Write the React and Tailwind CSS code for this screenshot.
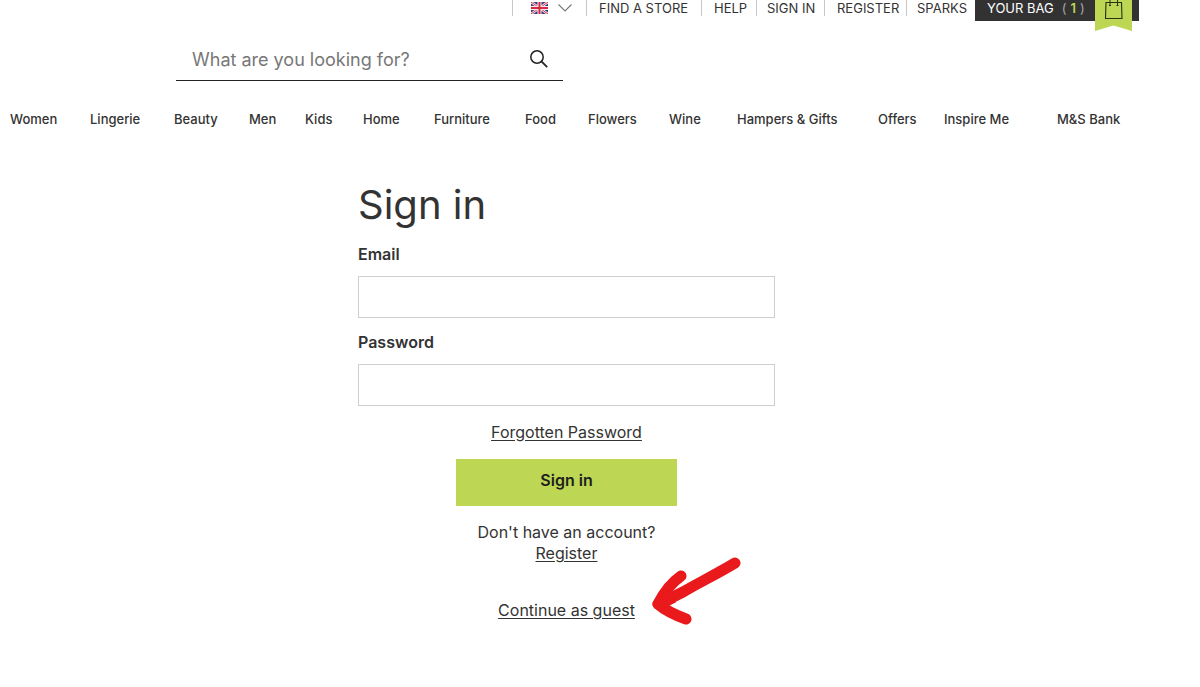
import { useState } from "react";

const UTILITY_LINKS = [
  { label: "FIND A STORE", className: "w-[115px] pl-3" },
  { label: "HELP", className: "w-[55px] pl-3" },
  { label: "SIGN IN", className: "w-[68px] pl-[10px]" },
  { label: "REGISTER", className: "w-[82px] pl-3" },
  { label: "SPARKS", className: "w-[69px] pl-[10px]" },
];

const DEPARTMENTS = [
  "Women", "Lingerie", "Beauty", "Men", "Kids", "Home", "Furniture",
  "Food", "Flowers", "Wine", "Hampers & Gifts", "Offers", "Inspire Me", "M&S Bank",
];

// ── icons ─────────────────────────────────────────────────────────────────
function FlagIcon() {
  return (
    <svg className="h-3 w-[17px]" viewBox="0 0 34 24" aria-hidden="true">
      <rect width="34" height="24" fill="#3b3f86" />
      <path d="M0 0L34 24M34 0L0 24" stroke="#f3e6ee" strokeWidth="5" />
      <path d="M0 0L34 24M34 0L0 24" stroke="#d8405a" strokeWidth="2" />
      <path d="M17 0V24M0 12H34" stroke="#f3e6ee" strokeWidth="8" />
      <path d="M17 0V24M0 12H34" stroke="#d8293f" strokeWidth="4" />
    </svg>
  );
}

function ChevronIcon() {
  return (
    <svg className="h-2 w-[14px]" viewBox="0 0 14 8" fill="none" stroke="#777" strokeWidth="1.1" aria-hidden="true">
      <path d="M0.5 0.5L7 7L13.5 0.5" />
    </svg>
  );
}

function SearchIcon() {
  return (
    <svg className="h-[18px] w-[18px]" viewBox="0 0 18 18" fill="none" stroke="#222" strokeWidth="1.5" aria-hidden="true">
      <circle cx="7" cy="7" r="6.2" />
      <path d="M11.4 11.4L17.2 17.2" strokeWidth="1.8" />
    </svg>
  );
}

function BagRibbon() {
  return (
    <svg className="absolute right-[7px] top-0 h-[31px] w-[37px]" viewBox="0 0 37 31" fill="none" aria-hidden="true">
      <path d="M0 0H37V31L18.5 25.5L0 31Z" fill="#bdd754" />
      <path d="M11 2.5H26.5L27 18.5H10.5Z" stroke="#2b3014" strokeWidth="1.1" />
      <path d="M15 6V0M22.5 6V0" stroke="#2b3014" strokeWidth="1" />
      <path d="M14 5.5H16M21.5 5.5H23.5" stroke="#2b3014" strokeWidth="1.2" />
    </svg>
  );
}

function Arrow() {
  return (
    <svg
      className="pointer-events-none absolute left-full top-1/2 ml-4 h-[70px] w-[90px] -translate-y-[55px]"
      viewBox="0 0 90 70" fill="none" stroke="#e9191c" strokeWidth="11" strokeLinecap="round" strokeLinejoin="round"
      aria-hidden="true"
    >
      <path d="M84 7C64 19 49 26 32 36C22 41 14 45 7 48" />
      <path d="M30 20C20 27 12 38 7 48C15 55 24 59 35 63" />
      <path d="M12 45L22 40" strokeWidth="14" strokeLinecap="butt" />
    </svg>
  );
}

// ── header ────────────────────────────────────────────────────────────────
function UtilityBar() {
  return (
    <div className="flex h-[21px] justify-end pr-[61px] text-[13px] leading-4">
      <div className="flex h-4">
        <button
          type="button"
          aria-label="Choose country"
          className="flex w-[74px] items-center gap-[10px] border-l border-[#c8c8c8] pl-[18px]"
        >
          <FlagIcon />
          <ChevronIcon />
        </button>
        {UTILITY_LINKS.map(({ label, className }) => (
          <a key={label} href="#" className={`whitespace-nowrap border-l border-[#c8c8c8] ${className}`}>
            {label}
          </a>
        ))}
      </div>
      <a href="#" className="relative flex h-[21px] w-[164px] gap-2 bg-[#323232] pl-3 text-white">
        <span>YOUR BAG</span>
        <span className="flex gap-1 text-[#a5a5a5]">
          <span>(</span>
          <span className="font-semibold text-[#bdd754]">1</span>
          <span>)</span>
        </span>
        <BagRibbon />
      </a>
    </div>
  );
}

function SearchForm() {
  const [query, setQuery] = useState("");

  return (
    <form
      onSubmit={e => e.preventDefault()}
      className="ml-44 mt-4 flex h-11 w-[387px] border-b border-[#222]"
    >
      <input
        type="search"
        aria-label="Search"
        placeholder="What are you looking for?"
        value={query}
        onChange={e => setQuery(e.target.value)}
        className="min-w-0 flex-1 pl-4 pt-[2px] text-lg outline-none placeholder:text-[#777]"
      />
      <button type="submit" aria-label="Search" className="flex w-12 items-center justify-center">
        <SearchIcon />
      </button>
    </form>
  );
}

function DepartmentNav() {
  return (
    <nav className="mt-7 pl-[10px]">
      <ul className="grid grid-cols-[80fr_84fr_75fr_56fr_58fr_71fr_91fr_63fr_81fr_68fr_141fr_66fr_113fr_143fr] text-[13px] font-medium leading-5">
        {DEPARTMENTS.map(name => (
          <li key={name} className="whitespace-nowrap">
            <a href="#">{name}</a>
          </li>
        ))}
      </ul>
    </nav>
  );
}

// ── sign in ───────────────────────────────────────────────────────────────
function Field({ id, label, type }) {
  return (
    <div className="mb-3">
      <label htmlFor={id} className="block text-base font-semibold leading-6">{label}</label>
      <input
        id={id}
        type={type}
        className="mt-[10px] block h-[42px] w-full border border-[#cfcfcf] bg-white px-3 text-base"
      />
    </div>
  );
}

function SignInForm() {
  return (
    <form onSubmit={e => e.preventDefault()} className="mx-auto w-full max-w-[417px]">
      <h1 className="mb-3 text-[40px] leading-[50px]">Sign in</h1>
      <Field id="email" label="Email" type="email" />
      <Field id="password" label="Password" type="password" />
      <div className="flex flex-col items-center pt-1 text-base leading-[21px]">
        <a href="#" className="underline underline-offset-2">Forgotten Password</a>
        <button type="submit" className="my-4 h-[47px] w-[221px] bg-[#bdd754] pb-1 font-semibold text-[#1e1e1e]">
          Sign in
        </button>
        <p>Don't have an account?</p>
        <a href="#" className="underline underline-offset-2">Register</a>
        <div className="relative mt-9">
          <a href="#" className="underline underline-offset-2">Continue as guest</a>
          <Arrow />
        </div>
      </div>
    </form>
  );
}

function App() {
  return (
    <div className="min-h-screen bg-white font-['Inter',sans-serif] text-[#333]">
      <header>
        <UtilityBar />
        <SearchForm />
        <DepartmentNav />
      </header>
      <main className="pb-16 pr-[67px] pt-[51px]">
        <SignInForm />
      </main>
    </div>
  );
}

export default App;
